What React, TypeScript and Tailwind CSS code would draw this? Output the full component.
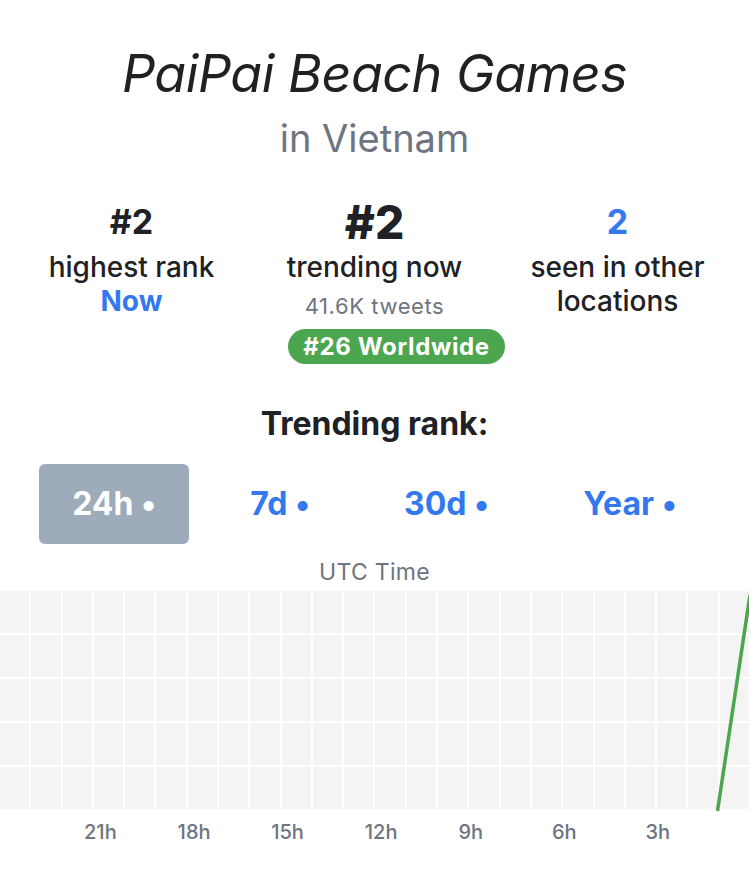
import React from "react";

const tabs = [
  { label: "24h", active: true },
  { label: "7d", active: false },
  { label: "30d", active: false },
  { label: "Year", active: false },
];

const hours = ["21h", "18h", "15h", "12h", "9h", "6h", "3h"];

const Chart = () => {
  const cells = Array.from({ length: 24 * 5 });
  return (
    <div className="relative w-full">
      <div className="grid grid-cols-[repeat(24,minmax(0,1fr))] grid-rows-[repeat(5,42px)] gap-[2px] bg-white pb-[2px]">
        {cells.map((_, i) => (
          <div key={i} className="bg-[#f4f4f4]" />
        ))}
      </div>
      {/* rank line */}
      <svg className="absolute left-0 top-0 h-[220px] w-full" viewBox="0 0 749 220" preserveAspectRatio="none">
        <line x1="717.5" y1="220" x2="750" y2="4" stroke="#4ca64f" strokeWidth="3.5" />
      </svg>
    </div>
  );
};

export default function App() {
  return (
    <div className="min-h-screen bg-white font-['Inter',sans-serif] text-[#202124]">
      <div className="flex flex-col items-center pt-[42px]">
        <h1 className="text-[52px] italic leading-[64px] tracking-[-0.5px]">PaiPai Beach Games</h1>
        <h2 className="mt-[10px] text-[38px] leading-[44px] text-[#6e7480]">in Vietnam</h2>
      </div>

      {/* Stats */}
      <div className="mt-[38px] grid grid-cols-3 px-[10px] text-center">
        <div className="flex flex-col items-center">
          <div className="text-[34px] font-bold leading-[48px]">#2</div>
          <div className="mt-[4px] text-[28px] font-medium leading-[34px]">highest rank</div>
          <div className="text-[28px] font-bold leading-[34px] text-[#3478f0]">Now</div>
        </div>
        <div className="flex flex-col items-center">
          <div className="text-[46px] font-extrabold leading-[48px]">#2</div>
          <div className="mt-[4px] text-[28px] font-medium leading-[34px]">trending now</div>
          <div className="mt-[7px] text-[22px] leading-[30px] tracking-[0.6px] text-[#6e7480]">41.6K tweets</div>
          <div className="mt-[8px] flex h-[35px] shrink-0 translate-x-[22px] items-center whitespace-nowrap rounded-full bg-[#4ca64f] px-[15px] text-[24px] font-bold tracking-[0.6px] text-white">
            #26 Worldwide
          </div>
        </div>
        <div className="flex flex-col items-center">
          <div className="text-[34px] font-bold leading-[48px] text-[#3478f0]">2</div>
          <div className="mt-[4px] px-[10px] text-[28px] font-medium leading-[34px]">seen in other locations</div>
        </div>
      </div>

      <div className="mt-[40px] text-center text-[32px] font-bold leading-[40px]">Trending rank:</div>

      {/* Range tabs */}
      <div className="mt-[20px] flex justify-center gap-[28px]">
        {tabs.map((t) => (
          <div
            key={t.label}
            className={`flex h-[80px] items-center rounded-md px-[33px] text-[32px] font-bold ${
              t.active ? "bg-[#9eabba] text-white" : "text-[#3478f0]"
            }`}
          >
            {t.label} •
          </div>
        ))}
      </div>

      <div className="mt-[14px] text-center text-[23px] leading-[28px] tracking-[0.3px] text-[#6e7480]">UTC Time</div>

      <div className="mt-[5px]">
        <Chart />
      </div>

      <div className="mt-[7px] flex pl-[84px] text-[20px] font-medium leading-[28px] text-[#6e7480]">
        {hours.map((h) => (
          <div key={h} className="w-[93.6px] shrink-0">
            {h}
          </div>
        ))}
      </div>
    </div>
  );
}
